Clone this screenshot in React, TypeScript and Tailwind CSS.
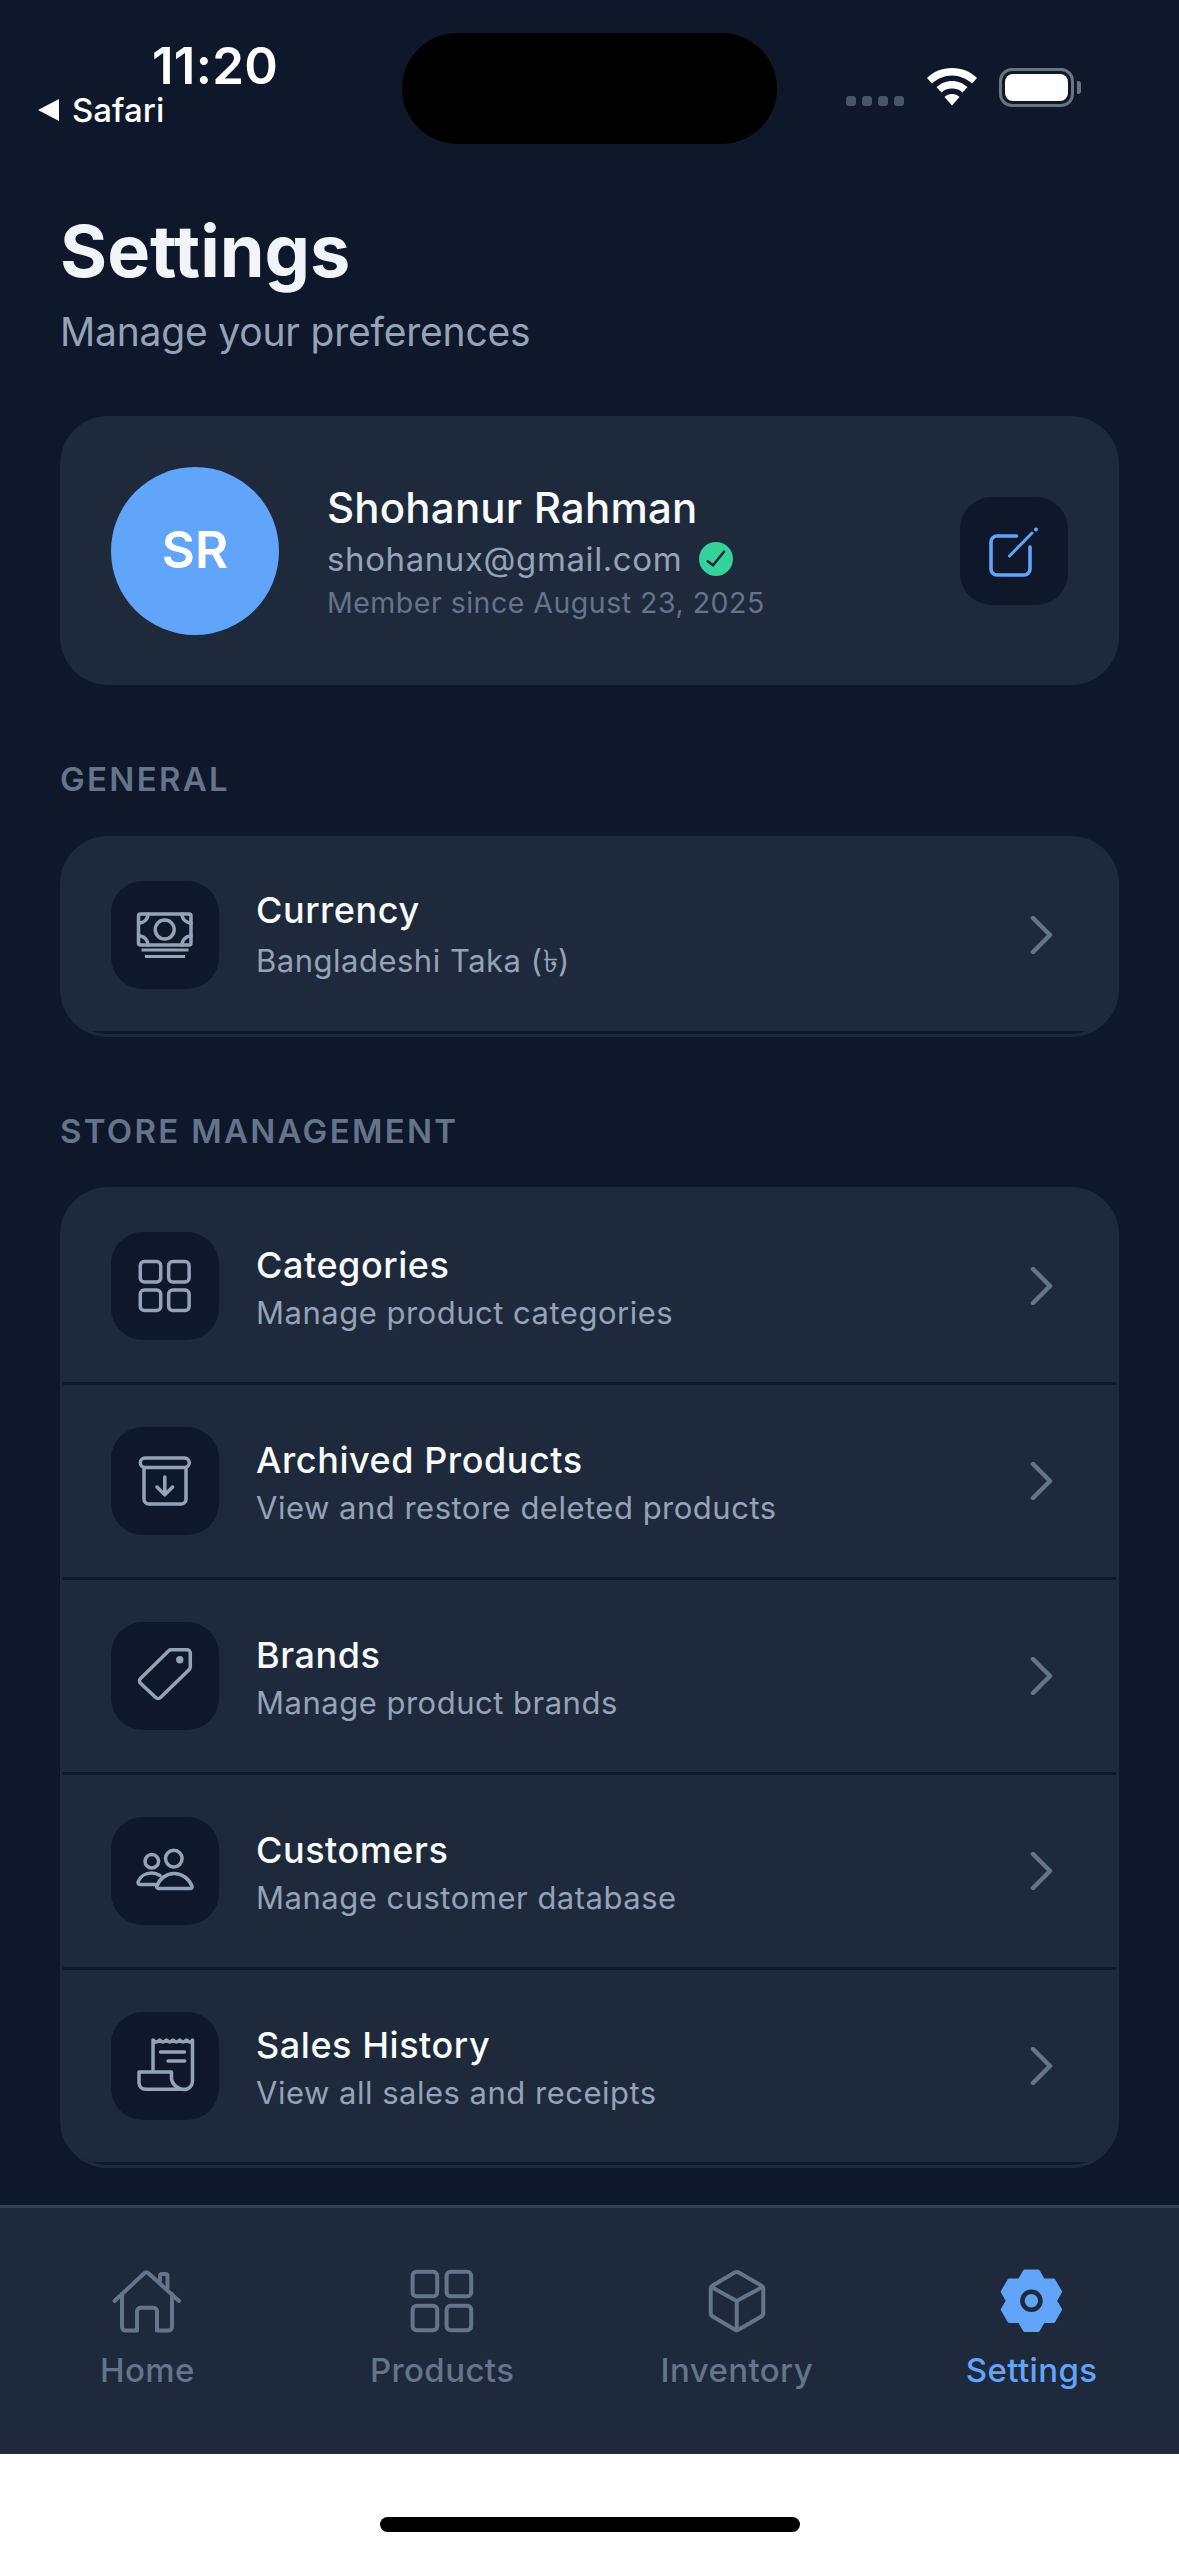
const font = "font-['Inter',sans-serif]";

function ItemIcon({ children }: { children: React.ReactNode }) {
  return (
    <div className="w-[108px] h-[108px] shrink-0 rounded-[32px] bg-[#0f172a]">
      <svg
        width="108"
        height="108"
        viewBox="0 0 108 108"
        fill="none"
        stroke="#94a3b8"
        strokeWidth="3.5"
        strokeLinecap="round"
        strokeLinejoin="round"
      >
        {children}
      </svg>
    </div>
  );
}

function Chevron() {
  return (
    <svg width="24" height="38" viewBox="0 0 24 38" fill="none" stroke="#64748b" strokeWidth="4.5" strokeLinecap="round" strokeLinejoin="round" className="shrink-0">
      <path d="M3 2 L20 19 L3 36" />
    </svg>
  );
}

const currencyIcon = (
  <>
    <rect x="27.5" y="33" width="52.5" height="31" rx="2" />
    <circle cx="53.7" cy="48.6" r="9.5" />
    <path d="M28 42c5 0 9-4 9-9M80 42c-5 0-9-4-9-9M28 55c5 0 9 4 9 9M80 55c-5 0-9 4-9 9" />
    <path d="M30.5 69h47M34 75.5h40" strokeWidth="3" strokeLinecap="butt" />
  </>
);

const categoriesIcon = (
  <>
    <rect x="29.3" y="29.6" width="20.4" height="20.4" rx="4" />
    <rect x="57.7" y="29.6" width="20.4" height="20.4" rx="4" />
    <rect x="29.3" y="58" width="20.4" height="20.4" rx="4" />
    <rect x="57.7" y="58" width="20.4" height="20.4" rx="4" />
  </>
);

const archiveIcon = (
  <>
    <rect x="29.3" y="31" width="49" height="9.5" rx="4.7" />
    <path d="M33 40.5V72a5 5 0 0 0 5 5h32a5 5 0 0 0 5-5V40.5" />
    <path d="M53.8 50v17.5M46 60l7.8 7.8 7.8-7.8" />
  </>
);

const tagIcon = (
  <>
    <path d="M60 27.8h16a3.3 3.3 0 0 1 3.3 3.3v14a3.3 3.3 0 0 1-1 2.3L49.5 75.5a3.5 3.5 0 0 1-4.8 0L29.5 61.2a3.3 3.3 0 0 1 0-4.8L57.8 28.7a3.3 3.3 0 0 1 2.2-.9z" />
    <circle cx="68.8" cy="37.8" r="3.7" fill="#94a3b8" stroke="none" />
  </>
);

const customersIcon = (
  <>
    <circle cx="62.8" cy="41.6" r="8.3" />
    <circle cx="40.8" cy="44.3" r="6.8" />
    <path d="M47.5 71.5h32a1.7 1.7 0 0 0 1.5-2.3C78 61.5 71 56.5 63.2 56.5S48.5 61.5 45.8 69.2a1.7 1.7 0 0 0 1.7 2.3z" />
    <path d="M49 58.5c-2.8-1.7-5.6-2.4-8.5-2.4-6 0-11.3 3.4-13.3 8.6-.6 1.6.4 2.8 1.8 2.8h15" />
  </>
);

const salesIcon = (
  <>
    <path d="M42 60V28c2.2 2.5 4.5 2.5 6.7 0 2.2 2.5 4.5 2.5 6.7 0 2.2 2.5 4.5 2.5 6.7 0 2.2 2.5 4.5 2.5 6.7 0 2.2 2.5 4.5 2.5 6.7 0 2.2 2.5 4 2.5 6 0v41c0 4.5-3.5 8.5-8.5 8.5S61 73 60.5 66.5V60H28v10.5c0 4 3 6.8 6.5 6.8h38" />
    <path d="M49.5 40h24M57 49h16.7" />
  </>
);

// six teeth around the tab bar's settings gear
function gearPath(cx: number, cy: number) {
  const at = (r: number, deg: number) => {
    const a = (deg * Math.PI) / 180;
    return `${(cx + r * Math.cos(a)).toFixed(2)} ${(cy + r * Math.sin(a)).toFixed(2)}`;
  };
  let d = "";
  for (let i = 0; i < 6; i++) {
    const a = -90 + i * 60;
    d += `${i === 0 ? "M" : "L"}${at(24, a - 30)} L${at(30.5, a - 13)} L${at(30.5, a + 13)} `;
  }
  return d + "Z";
}

const rows = [
  { title: "Categories", sub: "Manage product categories", icon: categoriesIcon },
  { title: "Archived Products", sub: "View and restore deleted products", icon: archiveIcon },
  { title: "Brands", sub: "Manage product brands", icon: tagIcon },
  { title: "Customers", sub: "Manage customer database", icon: customersIcon },
  { title: "Sales History", sub: "View all sales and receipts", icon: salesIcon },
];

function Row({ title, sub, icon, subGap }: { title: string; sub: string; icon: React.ReactNode; subGap?: boolean }) {
  return (
    <div className="flex items-center h-[195px] pl-[48px] pr-[62px] border-b-[3px] border-[#0f172a]">
      <ItemIcon>{icon}</ItemIcon>
      <div className={subGap ? "ml-[37px] flex-1 pb-[3px]" : "ml-[37px] flex-1 pt-[3px]"}>
        <div className="text-[36px] leading-[46px] font-medium text-[#f8fafc] tracking-[0.55px]">{title}</div>
        <div className={subGap ? "text-[31px] leading-[40px] mt-[8px] text-[#94a3b8] tracking-[0.5px]" : "text-[31px] leading-[40px] mt-[5px] text-[#94a3b8] tracking-[0.5px]"}>{sub}</div>
      </div>
      <Chevron />
    </div>
  );
}

function SectionLabel({ children }: { children: React.ReactNode }) {
  return <div className="text-[33px] leading-[40px] font-semibold text-[#64748b] tracking-[2.3px]">{children}</div>;
}

function NavItem({ label, active, children }: { label: string; active?: boolean; children: React.ReactNode }) {
  return (
    <div className="flex-1 flex flex-col items-center">
      <svg
        width="72"
        height="72"
        viewBox="0 0 72 72"
        fill="none"
        stroke="#64748b"
        strokeWidth="4"
        strokeLinecap="round"
        strokeLinejoin="round"
      >
        {children}
      </svg>
      <div className={active ? "mt-[11px] text-[33px] leading-[40px] font-medium text-[#60a5fa] tracking-[0.4px]" : "mt-[11px] text-[33px] leading-[40px] font-medium text-[#64748b] tracking-[0.4px]"}>
        {label}
      </div>
    </div>
  );
}

export default function App() {
  return (
    <div className={`${font} w-[1179px] h-[2556px] flex flex-col bg-[#0f172a] overflow-hidden`}>
      {/* status bar */}
      <div className="flex h-[144px] shrink-0 text-white">
        <div className="w-[402px] pt-[39px] pl-[38px]">
          <div className="ml-[114px] text-[51px] leading-[54px] font-semibold tracking-[0.3px]">11:20</div>
          <div className="flex items-center -mt-[3px]">
            <div className="w-0 h-0 border-y-[11px] border-y-transparent border-r-[21px] border-r-white" />
            <span className="ml-[13px] text-[33px] leading-[40px] font-medium">Safari</span>
          </div>
        </div>
        <div className="w-[375px] h-[111px] mt-[33px] rounded-[56px] bg-black" />
        <div className="flex items-start pl-[69px] pt-[68px]">
          <div className="flex gap-[6px] mt-[28px]">
            <div className="w-[10px] h-[10px] rounded-[3px] bg-[#475569]" />
            <div className="w-[10px] h-[10px] rounded-[3px] bg-[#475569]" />
            <div className="w-[10px] h-[10px] rounded-[3px] bg-[#475569]" />
            <div className="w-[10px] h-[10px] rounded-[3px] bg-[#475569]" />
          </div>
          <svg width="52" height="38" viewBox="0 0 52 38" className="ml-[22px]" fill="white">
            <path d="M26 0C16 0 7.5 3.5 1 10l5 5.5C11.5 10.5 18.5 7.5 26 7.5s14.5 3 20 8l5-5.5C44.5 3.5 36 0 26 0z" />
            <path d="M26 13c-6 0-11.5 2.3-15.5 6.3l5 5.3C18 22 21.8 20.5 26 20.5S34 22 36.5 24.6l5-5.3C37.5 15.3 32 13 26 13z" />
            <path d="M26 26c-3 0-5.6 1-7.5 3L26 37.500 33.500 29c-1.900-2-4.500-3-7.500-3z" />
          </svg>
          <div className="ml-[21px] w-[75px] h-[39px] rounded-[13px] border-[3px] border-[#6b7280] p-[3px]">
            <div className="w-full h-full rounded-[8px] bg-white" />
          </div>
          <div className="ml-[3px] mt-[13px] w-[4px] h-[13px] rounded-r-[3px] bg-[#6b7280]" />
        </div>
      </div>

      {/* content */}
      <main className="flex-1 px-[60px]">
        <h1 className="mt-[62px] text-[72px] leading-[90px] font-bold text-[#f1f5f9]">Settings</h1>
        <p className="text-[39px] leading-[50px] mt-[11px] text-[#94a3b8] tracking-[-0.2px]">Manage your preferences</p>

        <section className="flex items-center h-[269px] mt-[59px] pl-[51px] pr-[51px] rounded-[48px] bg-[#1e293b]">
          <div className="flex items-center justify-center w-[168px] h-[168px] rounded-full bg-[#60a5fa] text-white text-[51px] font-semibold">SR</div>
          <div className="ml-[48px] flex-1 pt-[2px]">
            <div className="text-[42px] leading-[52px] font-medium text-[#f8fafc] tracking-[0.2px]">Shohanur Rahman</div>
            <div className="flex items-center mt-[2px]">
              <span className="text-[33px] leading-[46px] text-[#94a3b8] tracking-[0.6px]">shohanux@gmail.com</span>
              <svg width="34" height="34" viewBox="0 0 34 34" className="ml-[17px]">
                <circle cx="17" cy="17" r="17" fill="#34d399" />
                <path d="M8.7 19.3l5.3 4L25 9.7" fill="none" stroke="#1e293b" strokeWidth="2.6" strokeLinecap="round" strokeLinejoin="round" />
              </svg>
            </div>
            <div className="text-[28.5px] leading-[36px] mt-[3px] text-[#64748b] tracking-[0.5px]">Member since August 23, 2025</div>
          </div>
          <div className="w-[108px] h-[108px] rounded-[32px] bg-[#0f172a]">
            <svg width="108" height="108" viewBox="0 0 108 108" fill="none" stroke="#60a5fa" strokeWidth="3.6" strokeLinecap="round" strokeLinejoin="round">
              <path d="M56.5 39H37a6 6 0 0 0-6 6v27a6 6 0 0 0 6 6h27a6 6 0 0 0 6-6V50" />
              <path d="M49.5 59L72 36" strokeWidth="3" />
              <circle cx="76" cy="32.5" r="2" fill="#60a5fa" stroke="none" />
            </svg>
          </div>
        </section>

        <div className="mt-[74px]">
          <SectionLabel>GENERAL</SectionLabel>
        </div>
        <section className="mt-[37px] rounded-[48px] bg-[#1e293b] overflow-hidden border-[3px] border-[#1e293b]">
          <Row title="Currency" sub="Bangladeshi Taka (৳)" icon={currencyIcon} subGap />
        </section>

        <div className="mt-[74px]">
          <SectionLabel>STORE MANAGEMENT</SectionLabel>
        </div>
        <section className="mt-[36px] rounded-[48px] bg-[#1e293b] overflow-hidden border-[3px] border-[#1e293b]">
          {rows.map((r) => (
            <Row key={r.title} {...r} />
          ))}
        </section>
      </main>

      {/* tab bar */}
      <nav className="flex h-[249px] shrink-0 pt-[59px] border-t-[3px] border-[#334155] bg-[#1e293b]">
        <NavItem label="Home">
          <path d="M3.5 34L33 6.5a3.5 3.5 0 0 1 4.8 0L68 34" />
          <path d="M11 27V60a3.5 3.5 0 0 0 3.5 3.5H26V44.3a3.5 3.5 0 0 1 3.5-3.5h13a3.5 3.5 0 0 1 3.5 3.5V63.5h11.5a3.5 3.5 0 0 0 3.5-3.5V27" />
          <path d="M49 13.5V9a2 2 0 0 1 2-2h3.5a2 2 0 0 1 2 2V21" />
        </NavItem>
        <NavItem label="Products">
          <rect x="6.6" y="4.7" width="24.6" height="24.6" rx="4" />
          <rect x="40.6" y="4.7" width="24.6" height="24.6" rx="4" />
          <rect x="6.6" y="38.7" width="24.6" height="24.6" rx="4" />
          <rect x="40.6" y="38.7" width="24.6" height="24.6" rx="4" />
        </NavItem>
        <NavItem label="Inventory">
          <path d="M33.7 5.5a4 4 0 0 1 4 0L60.3 18.5a4 4 0 0 1 2 3.5V46a4 4 0 0 1-2 3.5L37.7 62.5a4 4 0 0 1-4 0L11.7 49.5a4 4 0 0 1-2-3.5V22a4 4 0 0 1 2-3.500z" />
          <path d="M10.5 20L35.7 34 61.5 20M35.7 34V63.5" />
        </NavItem>
        <NavItem label="Settings" active>
          <path d={gearPath(35.4, 33.7)} fill="#60a5fa" stroke="#60a5fa" strokeWidth="3" />
          <circle cx="35.4" cy="33.7" r="9" fill="#60a5fa" stroke="#1e293b" strokeWidth="4.6" />
        </NavItem>
      </nav>

      {/* home indicator */}
      <div className="flex items-start justify-center h-[102px] shrink-0 pt-[63px] bg-white">
        <div className="w-[420px] h-[15px] rounded-full bg-black" />
      </div>
    </div>
  );
}
